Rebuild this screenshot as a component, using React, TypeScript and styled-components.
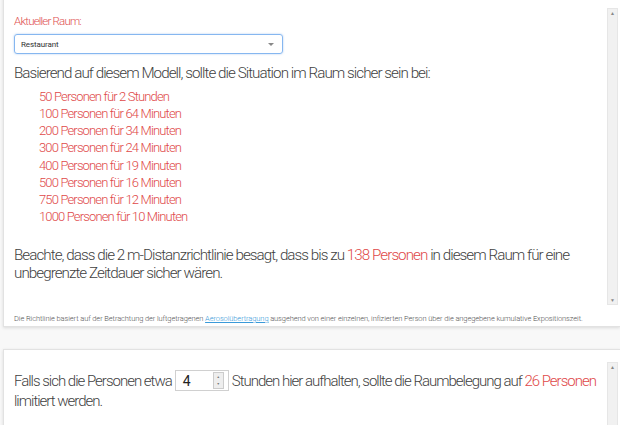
import React from "react";
import styled, { createGlobalStyle } from "styled-components";

const Global = createGlobalStyle`
  html, body {
    margin: 0;
    padding: 0;
    background: #f8f8f8;
    font-family: "Roboto", "Liberation Sans", sans-serif;
    font-weight: 300;
    color: #444;
    overflow: hidden;
  }
`;

const Page = styled.div`
  width: 620px;
  height: 425px;
  overflow: hidden;
  padding-left: 3px;
  box-sizing: border-box;
`;

const Card = styled.section<{ $top?: number }>`
  background: #fff;
  border: 1px solid #e2e2e2;
  border-right: none;
  box-shadow: 0 1px 3px rgba(0, 0, 0, 0.12);
  margin-top: ${(p) => p.$top ?? 0}px;
  ${(p) => (p.$top && p.$top < 0 ? "border-top: none;" : "")}
`;

const Body = styled.div<{ $h: number; $pt: number }>`
  display: flex;
  height: ${(p) => p.$h}px;
  padding-top: ${(p) => p.$pt}px;
  box-sizing: border-box;
`;

const Content = styled.div<{ $pt: number }>`
  flex: 1;
  padding: ${(p) => p.$pt}px 0 0 10px;
`;

const Scrollbar = styled.div`
  width: 9px;
  margin-right: 2px;
  background: #f1f1f1;
  border: 1px solid #e6e6e6;
  display: flex;
  flex-direction: column;
  justify-content: space-between;
  align-items: center;
  font-family: "DejaVu Sans", sans-serif;
  font-size: 5px;
  color: #888;
  line-height: 8px;
`;

const Label = styled.div`
  color: #e05050;
  font-size: 11.5px;
  line-height: 14px;
  letter-spacing: -0.8px;
`;

const Select = styled.div`
  margin-top: 6px;
  width: 269px;
  height: 20px;
  box-sizing: border-box;
  border: 1px solid #86b7f0;
  border-radius: 3px;
  box-shadow: 0 0 2px rgba(90, 150, 230, 0.5);
  display: flex;
  align-items: center;
  justify-content: space-between;
  padding: 0 8px 0 6px;
  font-size: 8px;
  font-weight: 400;
  color: #333;
  letter-spacing: -0.1px;
`;

const Caret = styled.span`
  width: 0;
  height: 0;
  border-left: 3px solid transparent;
  border-right: 3px solid transparent;
  border-top: 3px solid #888;
`;

const Heading = styled.p`
  margin: 9px 0 0;
  font-size: 15.2px;
  line-height: 20px;
  letter-spacing: -0.95px;
  color: #3f3f3f;
`;

const List = styled.ul`
  list-style: none;
  margin: 5px 0 0;
  padding: 0 0 0 25px;
`;

const Item = styled.li`
  color: #e04848;
  font-size: 13px;
  line-height: 17.15px;
  letter-spacing: -0.85px;
`;

const Paragraph = styled.p<{ $mt: number }>`
  margin: ${(p) => p.$mt}px 0 0;
  font-size: 15.2px;
  line-height: 18px;
  letter-spacing: -0.95px;
  color: #3f3f3f;
`;

const Red = styled.span`
  color: #e04848;
`;

const Note = styled.div`
  padding: 9px 0 3px 10px;
  font-size: 7.5px;
  line-height: 9px;
  color: #555;
  letter-spacing: -0.1px;
`;

const NoteLink = styled.a`
  color: #3a9ad9;
  text-decoration: underline;
`;

const NumberBox = styled.span`
  display: inline-flex;
  align-items: center;
  justify-content: space-between;
  vertical-align: middle;
  width: 54px;
  height: 21px;
  box-sizing: border-box;
  border: 1px solid #d0d0d0;
  padding: 0 4px 0 7px;
  margin: -3px 3px 0 3px;
  font-size: 14px;
  font-weight: 400;
  letter-spacing: 0;
  color: #222;
`;

const Spinner = styled.span`
  display: flex;
  flex-direction: column;
  width: 9px;
  height: 15px;
  border: 1px solid #ccc;
  background: #eee;
  font-family: "DejaVu Sans", sans-serif;
  font-size: 4px;
  line-height: 7px;
  text-align: center;
  color: #777;
`;

const Wide = styled(Paragraph)`
  font-size: 15px;
  line-height: 20px;
  letter-spacing: -1px;
`;

const hours = [
  ["50", "2 Stunden"],
  ["100", "64 Minuten"],
  ["200", "34 Minuten"],
  ["300", "24 Minuten"],
  ["400", "19 Minuten"],
  ["500", "16 Minuten"],
  ["750", "12 Minuten"],
  ["1000", "10 Minuten"],
];

export default function App() {
  return (
    <Page>
      <Global />
      <Card $top={-4}>
        <Body $h={309} $pt={12}>
          <Content $pt={6}>
            <Label>Aktueller Raum:</Label>
            <Select>
              <span>Restaurant</span>
              <Caret />
            </Select>
            <Heading>
              Basierend auf diesem Modell, sollte die Situation im Raum sicher sein bei:
            </Heading>
            <List>
              {hours.map(([n, t]) => (
                <Item key={n}>
                  {n} Personen für {t}
                </Item>
              ))}
            </List>
            <Paragraph $mt={21}>
              Beachte, dass die 2 m-Distanzrichtlinie besagt, dass bis zu <Red>138 Personen</Red> in diesem
              Raum für eine unbegrenzte Zeitdauer sicher wären.
            </Paragraph>
          </Content>
          <Scrollbar>
            <span>▲</span>
            <span>▼</span>
          </Scrollbar>
        </Body>
        <Note>
          Die Richtlinie basiert auf der Betrachtung der luftgetragenen{" "}
          <NoteLink href="#">Aerosolübertragung</NoteLink> ausgehend von einer einzelnen, infizierten Person über
          die angegebene kumulative Expositionszeit.
        </Note>
      </Card>
      <Card $top={22}>
        <Body $h={120} $pt={12}>
          <Content $pt={9}>
            <Wide $mt={0}>
              Falls sich die Personen etwa
              <NumberBox>
                4
                <Spinner>
                  <span>▴</span>
                  <span>▾</span>
                </Spinner>
              </NumberBox>
              Stunden hier aufhalten, sollte die Raumbelegung auf <Red>26 Personen</Red> limitiert werden.
            </Wide>
          </Content>
          <Scrollbar>
            <span>▲</span>
            <span />
          </Scrollbar>
        </Body>
      </Card>
    </Page>
  );
}
